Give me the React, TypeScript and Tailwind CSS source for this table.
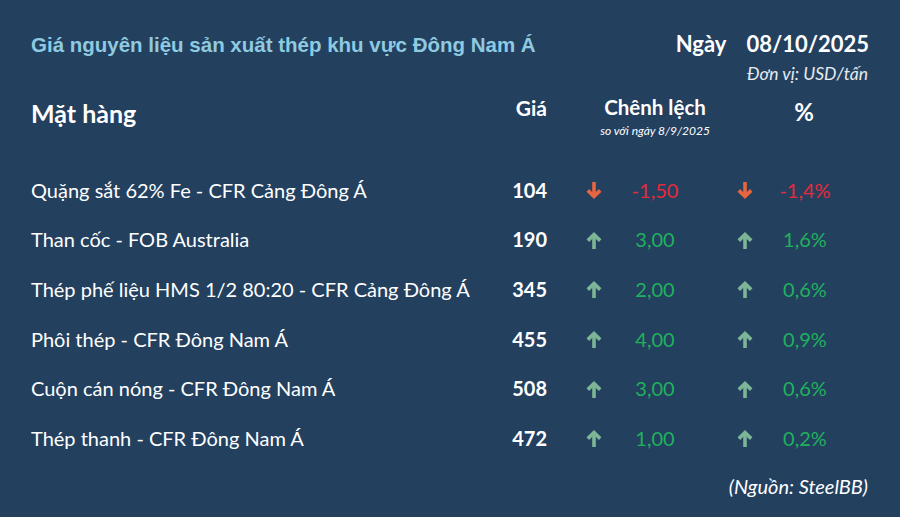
import React from "react";

type Row = {
  name: string;
  price: number;
  diff: string;
  pct: string;
  up: boolean;
};

const rows: Row[] = [
  { name: "Quặng sắt 62% Fe - CFR Cảng Đông Á", price: 104, diff: "-1,50", pct: "-1,4%", up: false },
  { name: "Than cốc - FOB Australia", price: 190, diff: "3,00", pct: "1,6%", up: true },
  { name: "Thép phế liệu HMS 1/2 80:20 - CFR Cảng Đông Á", price: 345, diff: "2,00", pct: "0,6%", up: true },
  { name: "Phôi thép - CFR Đông Nam Á", price: 455, diff: "4,00", pct: "0,9%", up: true },
  { name: "Cuộn cán nóng - CFR Đông Nam Á", price: 508, diff: "3,00", pct: "0,6%", up: true },
  { name: "Thép thanh - CFR Đông Nam Á", price: 472, diff: "1,00", pct: "0,2%", up: true },
];

function Arrow({ up }: { up: boolean }) {
  return (
    <svg
      width="16"
      height="17"
      viewBox="0 0 16 17"
      fill="none"
      stroke={up ? "#7db597" : "#e8653f"}
      strokeWidth="3.6"
      strokeLinecap="butt"
      strokeLinejoin="miter"
    >
      {up ? (
        <>
          <path d="M8 17V3" />
          <path d="M1.8 8.6L8 2.6l6.2 6" />
        </>
      ) : (
        <>
          <path d="M8 0v14" />
          <path d="M1.8 8.4L8 14.4l6.2-6" />
        </>
      )}
    </svg>
  );
}

const grid = "grid grid-cols-[466px_50px_67px_82px_69px_80px] items-center";

export default function App() {
  return (
    <div className="w-[900px] h-[517px] bg-[#23405f] text-white font-['Lato','Noto_Sans',sans-serif] px-[31px] overflow-hidden">
      <div className="flex items-start justify-between h-[88px]">
        <div className="mt-[30px] font-['Liberation_Sans',Arial,sans-serif] font-bold text-[20.5px] text-[#8ecae0]">
          Giá nguyên liệu sản xuất thép khu vực Đông Nam Á
        </div>
        <div className="mt-[29px] flex flex-col items-end">
          <div className="flex items-center gap-[20px] text-[22px] font-bold leading-[30px]">
            <span>Ngày</span>
            <span>08/10/2025</span>
          </div>
          <div className="italic text-[17.5px] mt-[4px] leading-[22px] text-white/90 pr-[1px]">Đơn vị: USD/tấn</div>
        </div>
      </div>

      <div className={`${grid} h-[50px]`}>
        <div className="text-[25px] font-bold">Mặt hàng</div>
        <div className="text-right text-[21px] font-bold self-start mt-[4px]">Giá</div>
        <div />
        <div className="flex flex-col items-center mt-[6px]">
          <span className="text-[20.5px] font-bold whitespace-nowrap leading-[26px]">Chênh lệch</span>
          <span className="text-[12px] italic whitespace-nowrap leading-[16px] mt-[3px]">so với ngày 8/9/2025</span>
        </div>
        <div />
        <div className="text-center text-[24px] font-bold self-start mt-[6px] pr-[2px]">%</div>
      </div>

      <div className="mt-[27px] flex flex-col">
        {rows.map((r) => (
          <div key={r.name} className={`${grid} h-[49.6px] text-[20px]`}>
            <div className="whitespace-nowrap">{r.name}</div>
            <div className="text-right font-bold">{r.price}</div>
            <div className="flex justify-end pr-[12px] pt-[2px]">
              <Arrow up={r.up} />
            </div>
            <div className={`text-center ${r.up ? "text-[#1fb25c]" : "text-[#e52a3d]"}`}>{r.diff}</div>
            <div className="flex justify-end pr-[12px] pt-[2px]">
              <Arrow up={r.up} />
            </div>
            <div className={`text-center ${r.up ? "text-[#1fb25c]" : "text-[#e52a3d]"}`}>{r.pct}</div>
          </div>
        ))}
      </div>

      <div className="flex justify-end mt-[8px] pr-[1px]">
        <span className="italic text-[20px]">(Nguồn: SteelBB)</span>
      </div>
    </div>
  );
}
